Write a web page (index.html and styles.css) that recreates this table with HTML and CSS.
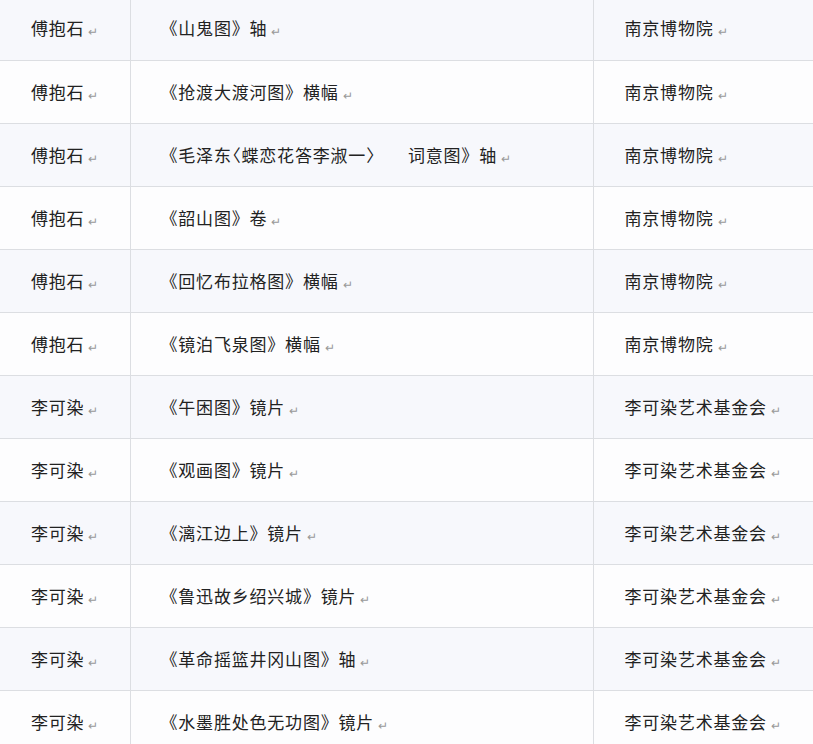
FILE: index.html
```html
<!DOCTYPE html>
<html lang="zh">
<head>
<meta charset="utf-8">
<link rel="stylesheet" href="styles.css">
</head>
<body>
<table class="list">
<colgroup><col class="c1"><col class="c2"><col class="c3"></colgroup>
<tbody>
<tr><td>傅抱石<span class="pm">↵</span></td><td>《山鬼图》轴<span class="pm">↵</span></td><td>南京博物院<span class="pm">↵</span></td></tr>
<tr><td>傅抱石<span class="pm">↵</span></td><td>《抢渡大渡河图》横幅<span class="pm">↵</span></td><td>南京博物院<span class="pm">↵</span></td></tr>
<tr><td>傅抱石<span class="pm">↵</span></td><td>《毛泽东<span class="lq">〈</span>蝶恋花答李淑一<span class="rq">〉</span><span class="gap"></span>词意图》轴<span class="pm">↵</span></td><td>南京博物院<span class="pm">↵</span></td></tr>
<tr><td>傅抱石<span class="pm">↵</span></td><td>《韶山图》卷<span class="pm">↵</span></td><td>南京博物院<span class="pm">↵</span></td></tr>
<tr><td>傅抱石<span class="pm">↵</span></td><td>《回忆布拉格图》横幅<span class="pm">↵</span></td><td>南京博物院<span class="pm">↵</span></td></tr>
<tr><td>傅抱石<span class="pm">↵</span></td><td>《镜泊飞泉图》横幅<span class="pm">↵</span></td><td>南京博物院<span class="pm">↵</span></td></tr>
<tr><td>李可染<span class="pm">↵</span></td><td>《午困图》镜片<span class="pm">↵</span></td><td>李可染艺术基金会<span class="pm">↵</span></td></tr>
<tr><td>李可染<span class="pm">↵</span></td><td>《观画图》镜片<span class="pm">↵</span></td><td>李可染艺术基金会<span class="pm">↵</span></td></tr>
<tr><td>李可染<span class="pm">↵</span></td><td>《漓江边上》镜片<span class="pm">↵</span></td><td>李可染艺术基金会<span class="pm">↵</span></td></tr>
<tr><td>李可染<span class="pm">↵</span></td><td>《鲁迅故乡绍兴城》镜片<span class="pm">↵</span></td><td>李可染艺术基金会<span class="pm">↵</span></td></tr>
<tr><td>李可染<span class="pm">↵</span></td><td>《革命摇篮井冈山图》轴<span class="pm">↵</span></td><td>李可染艺术基金会<span class="pm">↵</span></td></tr>
<tr><td>李可染<span class="pm">↵</span></td><td>《水墨胜处色无功图》镜片<span class="pm">↵</span></td><td>李可染艺术基金会<span class="pm">↵</span></td></tr>
</tbody>
</table>
</body>
</html>
```
FILE: styles.css
```css
html, body {
  margin: 0;
  padding: 0;
  background: #ffffff;
  overflow: hidden;
}
.list {
  border-collapse: collapse;
  table-layout: fixed;
  width: 813px;
  margin-top: -3px;
  font-family: "Noto Sans CJK SC", "Noto Sans", sans-serif;
  font-size: 17px;
  letter-spacing: 0.8px;
  color: #222222;
}
.c1 { width: 130px; }
.c2 { width: 463px; }
.c3 { width: 220px; }
.list tr {
  height: 63px;
}
.list tr:nth-child(odd) { background: #f7f8fc; }
.list tr:nth-child(even) { background: #fdfdfe; }
.list td {
  padding: 3px 0 0 0;
  border-bottom: 1px solid #dcdee2;
  border-right: 1px solid #dcdee2;
  vertical-align: middle;
  white-space: nowrap;
  line-height: 20px;
}
.list td:nth-child(1) { padding-left: 31px; }
.list td:nth-child(2) { padding-left: 30px; }
.list td:nth-child(3) { padding-left: 31px; border-right: none; }
.pm {
  font-size: 12px;
  color: #999999;
  margin-left: 4px;
  letter-spacing: 0;
  vertical-align: -1px;
}
.lq { margin-left: -8px; }
.rq { margin-right: -6px; }
.gap {
  display: inline-block;
  width: 30px;
}
```
